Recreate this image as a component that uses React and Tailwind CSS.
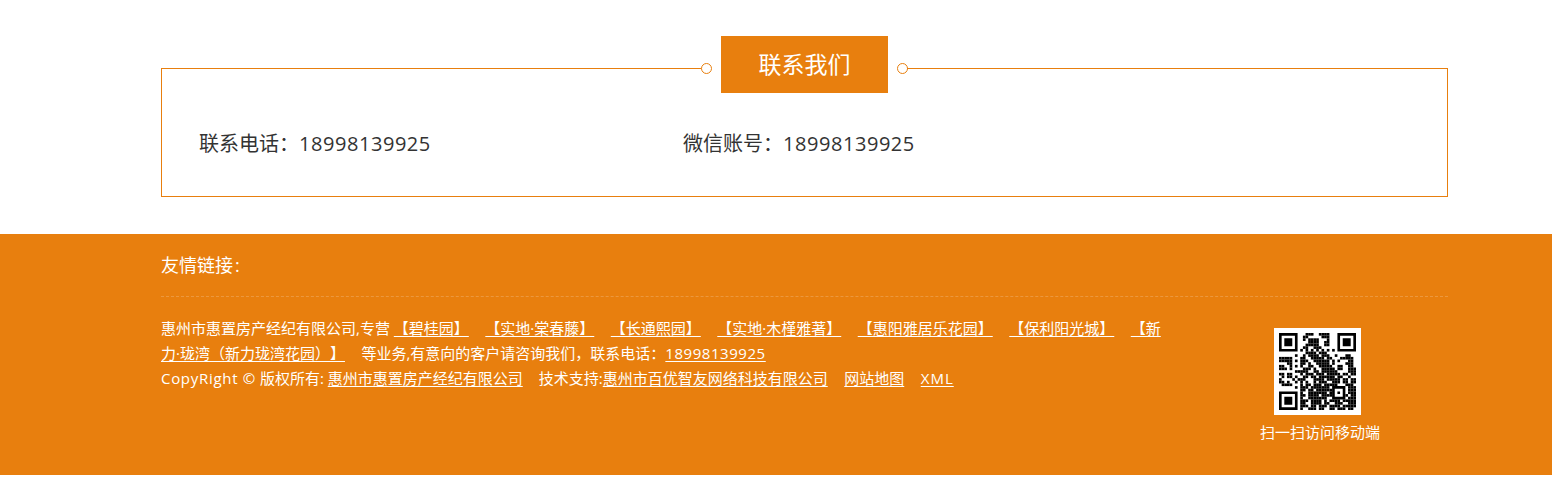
const QR = [
"..........###..####..........",
".........##.....###..........",
".........#.####...#..........",
"...........####..##..........",
"..........#####..##..........",
".........##..###.............",
"........#.###.#.#............",
"..........####.###...........",
"......#..#.####.###..#...##..",
"#####.#.##..#####.##...#####.",
"#####...###..######.#.#...##.",
"...##.#.##.#..#####.#....###.",
"##..#...#..##..#####..##..##.",
"###.#.#..###.#..#####.##..###",
"......#####..##.######....###",
"##.##...#.###.###.#####.##.##",
".#.##.#..##.##.######.##..#..",
"#....#.###...####.#####.##.##",
"##.#..#.#.#..#.###..###.##.##",
".####...#.##.###.#####...###.",
"........###.#######.#...#.###",
"........##.##.######.#..#.###",
"........#..#######.##...#.###",
"........##.####.####....##.##",
"........#..#######..##.#..###",
"........###.####.#.####.#####",
"........##..####.##..###..###",
"........###.##.###.####.#####",
"........#..###.##..##.###.##.",
];

function QrCode() {
  const cells = [];
  QR.forEach((row, y) => {
    [...row].forEach((c, x) => {
      const inAlign = x >= 20 && x <= 24 && y >= 20 && y <= 24;
      const inTiming = (y === 6 && x >= 8 && x <= 20) || (x === 6 && y >= 8 && y <= 20);
      if (inAlign || inTiming) return;
      if (c === "#") cells.push(<rect key={`${x}-${y}`} x={x} y={y} width="1" height="1" />);
    });
  });
  for (let i = 8; i <= 20; i += 2) {
    cells.push(<rect key={`th${i}`} x={i} y="6" width="1" height="1" />);
    cells.push(<rect key={`tv${i}`} x="6" y={i} width="1" height="1" />);
  }
  const finder = (x, y) => (
    <path
      key={`f${x}${y}`}
      fillRule="evenodd"
      d={`M${x} ${y}h7v7h-7zM${x + 1} ${y + 1}v5h5v-5zM${x + 2} ${y + 2}h3v3h-3z`}
    />
  );
  return (
    <div className="w-[87px] h-[87px] bg-white p-[5px]">
      <svg viewBox="0 0 29 29" className="w-[77px] h-[77px] block" fill="#000">
        {cells}
        {finder(0, 0)}
        {finder(22, 0)}
        {finder(0, 22)}
        <path fillRule="evenodd" d="M20 20h5v5h-5zM21 21v3h3v-3zM22 22h1v1h-1z" />
      </svg>
    </div>
  );
}

function Circle() {
  return <span className="block w-[11px] h-[11px] rounded-full border border-[#e87f0e] bg-white shrink-0" />;
}

function Digits({ children }) {
  return <span className="tracking-[0.55px]">{children}</span>;
}

function L({ children, gap = "mr-[16.5px]" }) {
  return <a className={`underline underline-offset-2 ${gap}`}>{children}</a>;
}

export default function App() {
  return (
    <div className="w-full h-[477px] bg-white font-['Open_Sans','Noto_Sans_CJK_SC',sans-serif] [text-spacing-trim:space-all] overflow-hidden">
      <div className="w-[1287px] ml-[161px] pt-[36px] h-[234px]">
        <div className="flex items-start">
          <div className="flex-1 h-[25px] mt-[32px] border-t border-l border-[#e87f0e]" />
          <div className="-ml-px mt-[27px]"><Circle /></div>
          <div className="w-[167px] h-[57px] ml-[9px] mr-[9px] bg-[#e87f0e] text-white text-[23px] flex items-center justify-center">
            联系我们
          </div>
          <div className="-mr-px mt-[27px]"><Circle /></div>
          <div className="flex-1 h-[25px] mt-[32px] border-t border-r border-[#e87f0e]" />
        </div>
        <div className="h-[104px] border-x border-b border-[#e87f0e] pl-[37px] flex text-[20px] leading-[28px] text-[#333] pt-[37px]">
          <div className="w-[484px]">联系电话：<Digits>18998139925</Digits></div>
          <div>微信账号：<Digits>18998139925</Digits></div>
        </div>
      </div>
      <footer className="h-[241px] bg-[#e87f0e] text-white">
        <div className="w-[1287px] ml-[161px]">
          <div className="h-[63px] border-b border-dashed border-white/20 text-[18px] leading-[63px]">友情链接<span className="ml-[2px]">:</span></div>
          <div className="flex justify-between pt-[19px] pr-[68px]">
            <div className="w-[1000px] text-[15px] leading-[25px]">
              惠州市惠置房产经纪有限公司,专营{" "}
              <L>【碧桂园】</L>
              <L>【实地·棠春藤】</L>
              <L>【长通熙园】</L>
              <L>【实地·木槿雅著】</L>
              <L>【惠阳雅居乐花园】</L>
              <L>【保利阳光城】</L>
              <L>【新力·珑湾（新力珑湾花园）】</L>
              等业务,有意向的客户请咨询我们，联系电话：
              <L gap=""><Digits>18998139925</Digits></L>
              <br />
              <span className="tracking-[0.7px]">CopyRight ©</span> 版权所有:{" "}
              <L gap="mr-[16px]">惠州市惠置房产经纪有限公司</L>
              技术支持:
              <L>惠州市百优智友网络科技有限公司</L>
              <L>网站地图</L>
              <L gap=""><span className="tracking-[1px]">XML</span></L>
            </div>
            <div className="w-[120px] flex flex-col items-center pt-[12px]">
              <div className="self-start ml-[14px]"><QrCode /></div>
              <div className="mt-[5px] text-[15px] leading-[25px] whitespace-nowrap">扫一扫访问移动端</div>
            </div>
          </div>
        </div>
      </footer>
    </div>
  );
}
